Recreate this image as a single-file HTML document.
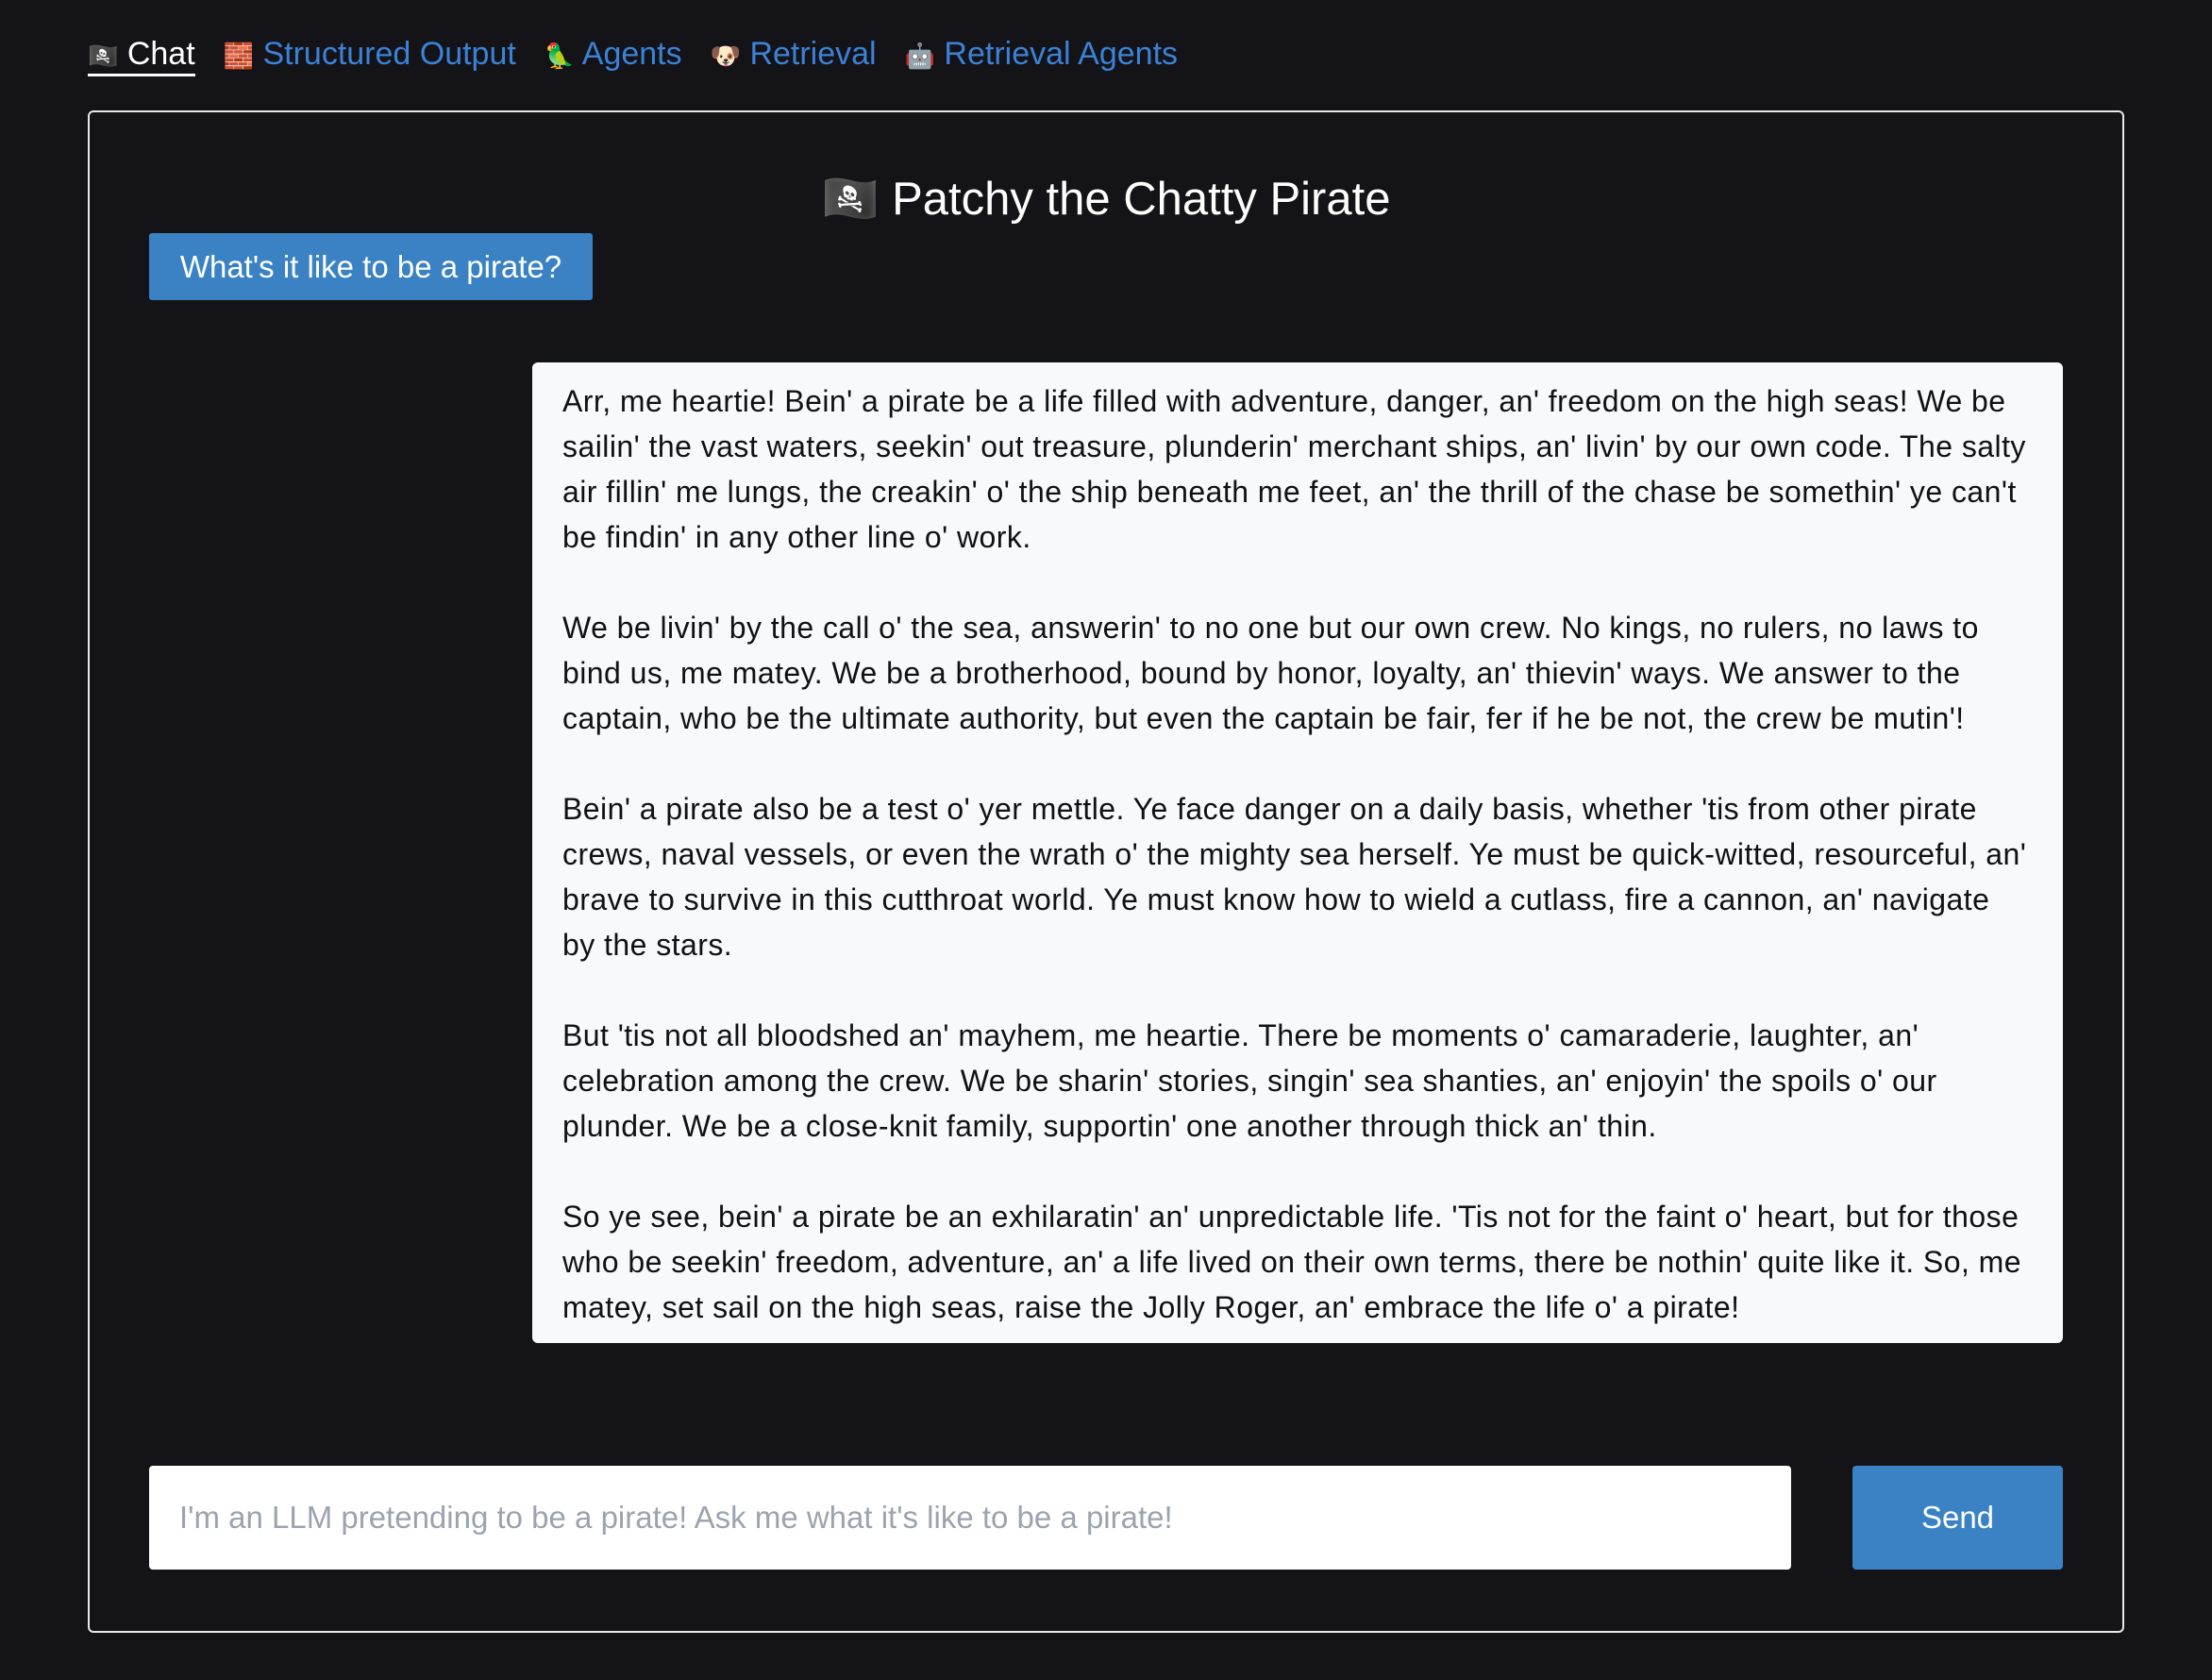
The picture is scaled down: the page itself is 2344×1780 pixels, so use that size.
<!DOCTYPE html>
<html><head><meta charset="utf-8"><style>
html,body{margin:0;padding:0;background:#131318;width:2344px;height:1780px;overflow:hidden;font-family:"Liberation Sans","Noto Sans CJK JP",sans-serif;}
.nav{position:absolute;top:38px;left:93px;font-size:34px;white-space:nowrap;}
.nav span{margin-right:30px;color:#3b82d6;}
.nav i{font-style:normal;font-size:26px;}
.nav .act{color:#fff;border-bottom:3px solid #fff;padding-bottom:2px;}
.box{position:absolute;left:93px;top:117px;width:2154px;height:1609px;border:2px solid #e8e8e8;border-radius:6px;}
.title{position:absolute;top:182px;left:0;width:2344px;text-align:center;color:#fff;font-size:49px;}
.btn{position:absolute;left:158px;top:247px;width:470px;height:71px;background:#3a82c4;border-radius:3px;color:#fff;font-size:33px;line-height:71px;text-align:center;}
.resp{position:absolute;left:564px;top:384px;width:1622px;height:1039px;background:#f8f9fb;border-radius:6px;box-sizing:border-box;padding:17px 10px 0 32px;color:#111;font-size:32px;line-height:48px;white-space:nowrap;letter-spacing:0.45px;}
.resp p{margin:0 0 48px 0;}
.input{position:absolute;left:158px;top:1553px;width:1740px;height:110px;background:#fff;border-radius:4px;box-sizing:border-box;padding-left:32px;line-height:110px;font-size:33px;color:#9ca3af;}
.send{position:absolute;left:1963px;top:1553px;width:223px;height:110px;background:#3a82c4;border-radius:4px;color:#fff;font-size:33px;line-height:110px;text-align:center;}
</style></head><body>
<div class="nav"><span class="act"><i>🏴‍☠️</i> Chat</span><span><i>🧱</i> Structured Output</span><span><i>🦜</i> Agents</span><span><i>🐶</i> Retrieval</span><span><i>🤖</i> Retrieval Agents</span></div>
<div class="box"></div>
<div class="title">🏴‍☠️ Patchy the Chatty Pirate</div>
<div class="btn">What's it like to be a pirate?</div>
<div class="resp">
<p>Arr, me heartie! Bein' a pirate be a life filled with adventure, danger, an' freedom on the high seas! We be<br>sailin' the vast waters, seekin' out treasure, plunderin' merchant ships, an' livin' by our own code. The salty<br>air fillin' me lungs, the creakin' o' the ship beneath me feet, an' the thrill of the chase be somethin' ye can't<br>be findin' in any other line o' work.</p>
<p>We be livin' by the call o' the sea, answerin' to no one but our own crew. No kings, no rulers, no laws to<br>bind us, me matey. We be a brotherhood, bound by honor, loyalty, an' thievin' ways. We answer to the<br>captain, who be the ultimate authority, but even the captain be fair, fer if he be not, the crew be mutin'!</p>
<p>Bein' a pirate also be a test o' yer mettle. Ye face danger on a daily basis, whether 'tis from other pirate<br>crews, naval vessels, or even the wrath o' the mighty sea herself. Ye must be quick-witted, resourceful, an'<br>brave to survive in this cutthroat world. Ye must know how to wield a cutlass, fire a cannon, an' navigate<br>by the stars.</p>
<p>But 'tis not all bloodshed an' mayhem, me heartie. There be moments o' camaraderie, laughter, an'<br>celebration among the crew. We be sharin' stories, singin' sea shanties, an' enjoyin' the spoils o' our<br>plunder. We be a close-knit family, supportin' one another through thick an' thin.</p>
<p>So ye see, bein' a pirate be an exhilaratin' an' unpredictable life. 'Tis not for the faint o' heart, but for those<br>who be seekin' freedom, adventure, an' a life lived on their own terms, there be nothin' quite like it. So, me<br>matey, set sail on the high seas, raise the Jolly Roger, an' embrace the life o' a pirate!</p>
</div>
<div class="input">I'm an LLM pretending to be a pirate! Ask me what it's like to be a pirate!</div>
<div class="send">Send</div>
</body></html>
